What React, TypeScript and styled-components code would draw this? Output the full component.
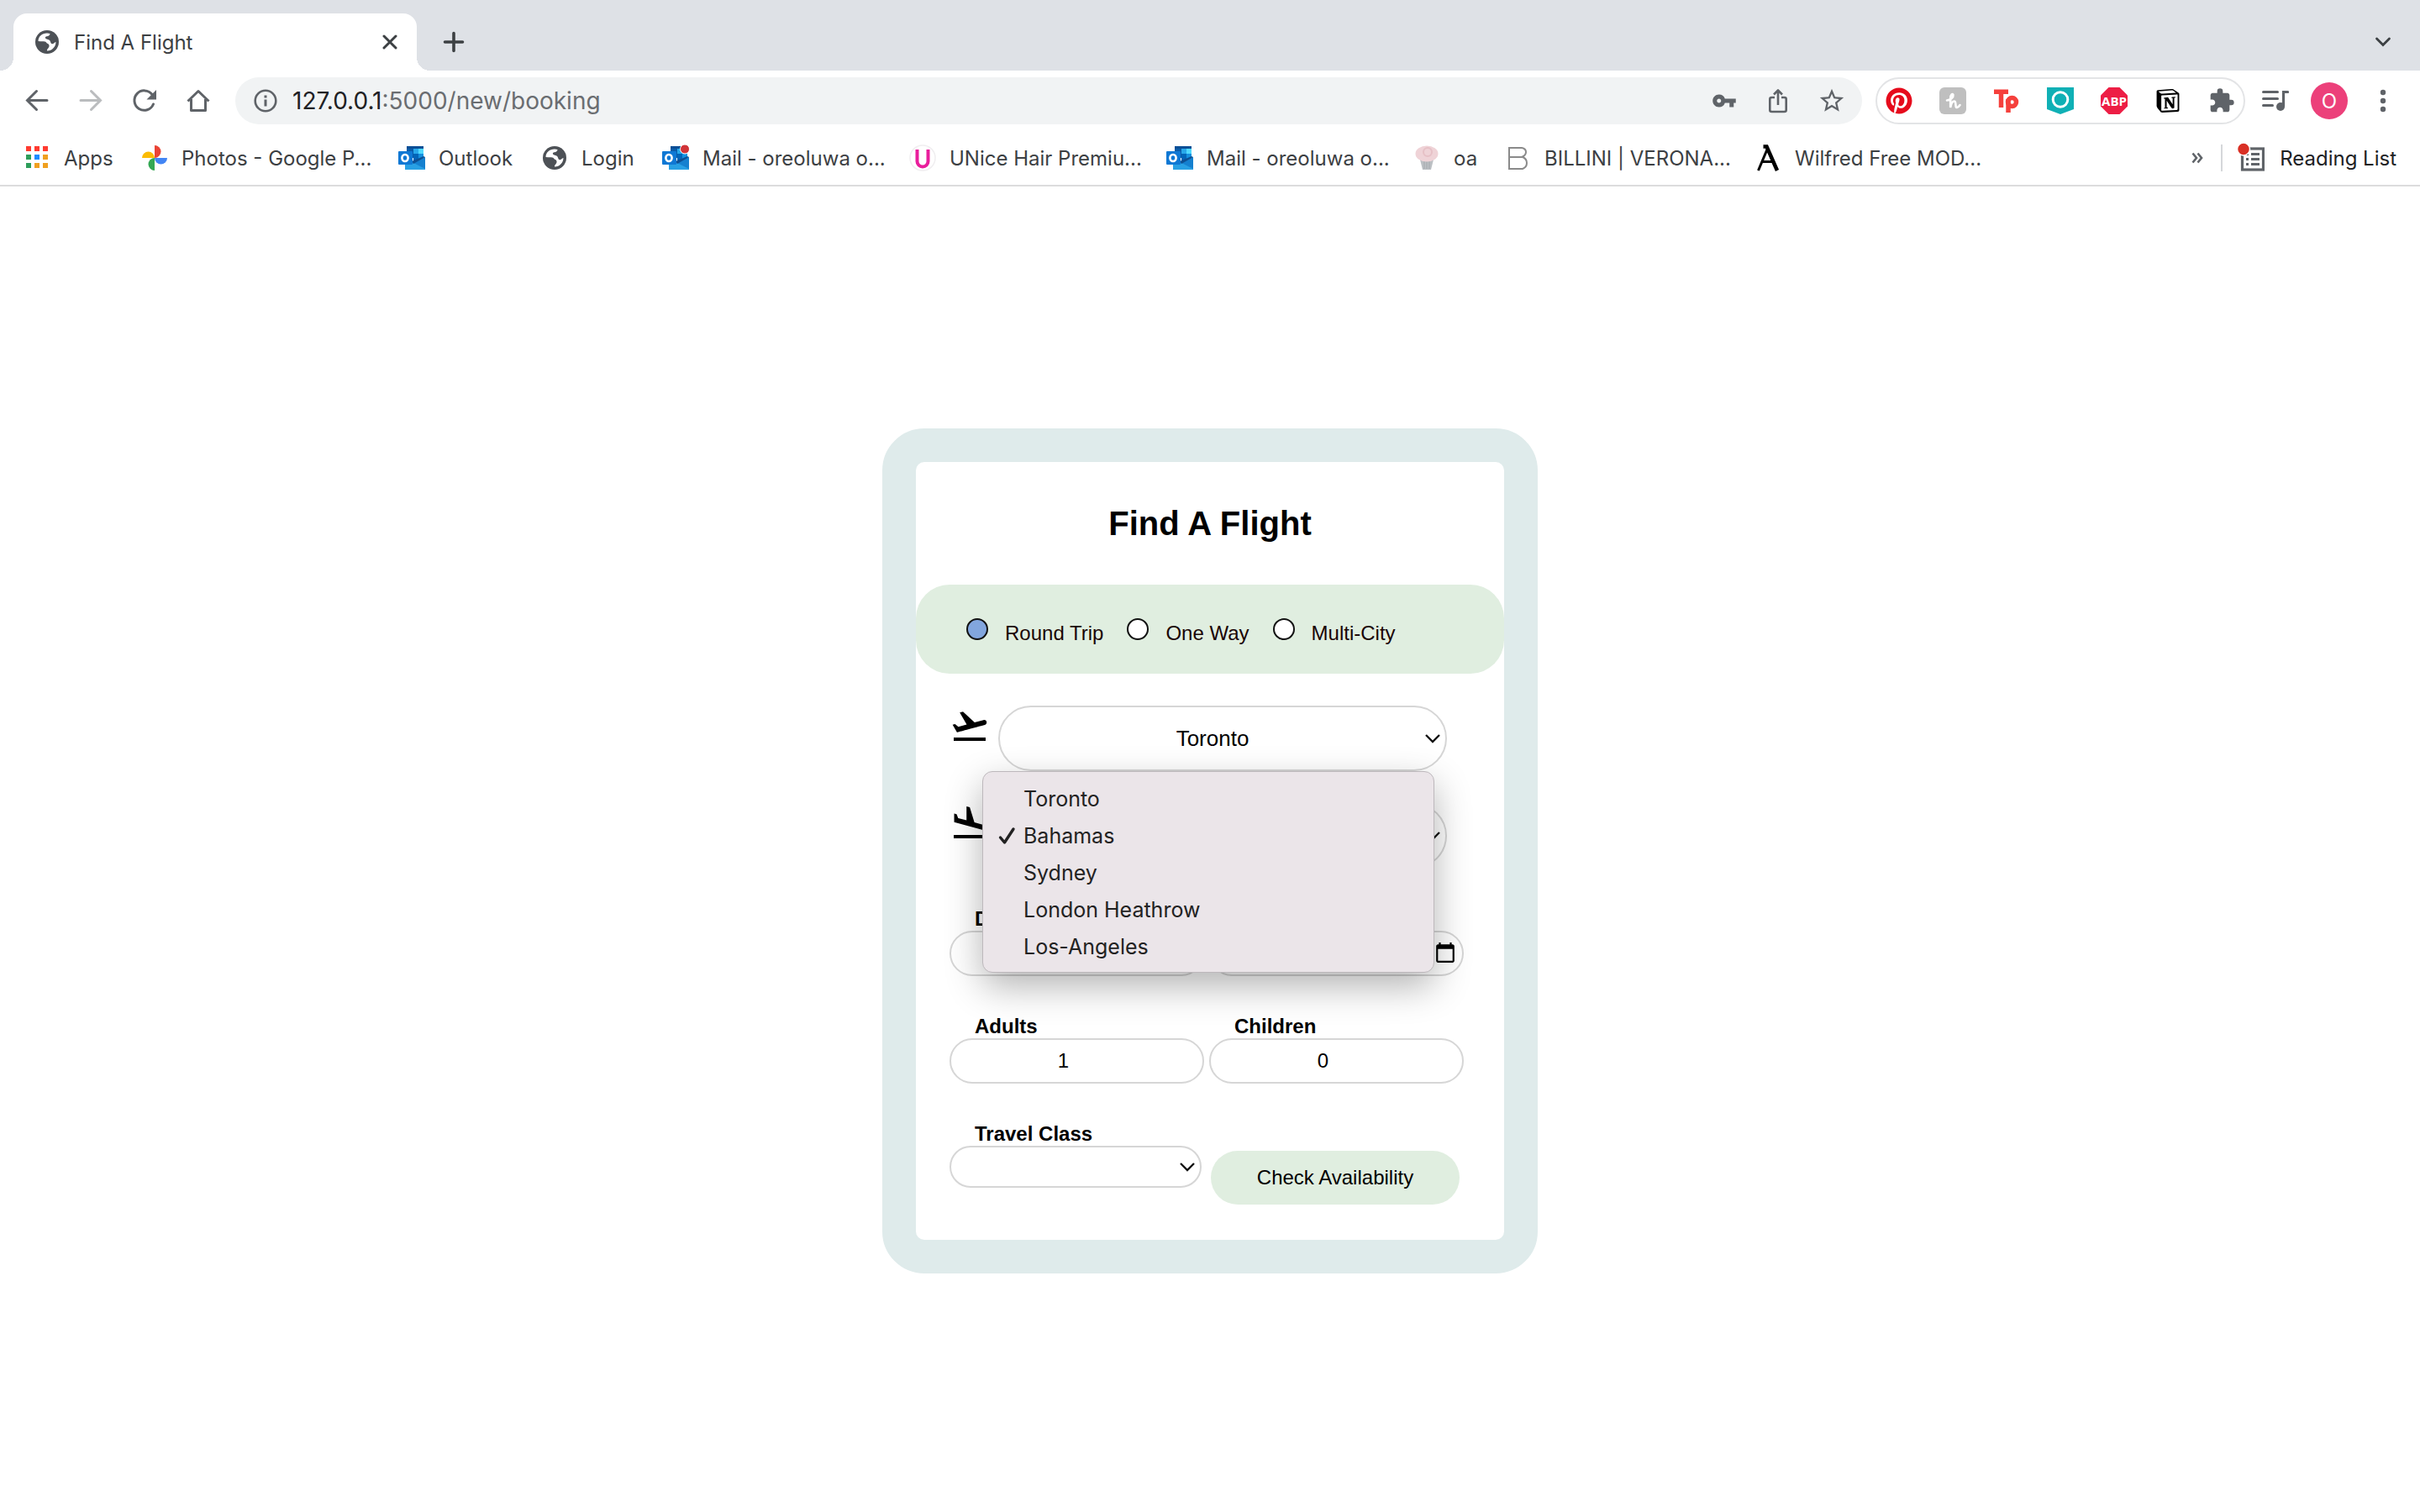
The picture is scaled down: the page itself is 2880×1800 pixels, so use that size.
import React, { ReactNode } from "react";
import styled, { createGlobalStyle, css } from "styled-components";
import { MdExtension, MdFlightLand, MdFlightTakeoff, MdStarBorder, MdVpnKey } from "react-icons/md";
import { FaPinterest } from "react-icons/fa";
import { SiNotion } from "react-icons/si";

const UI_FONT = `Inter, "Liberation Sans", sans-serif`;
const PAGE_FONT = `"Liberation Sans", Arial, sans-serif`;

const GlobalStyle = createGlobalStyle`
  *, *::before, *::after { box-sizing: border-box; }
  body { margin: 0; background: #fff; font-family: ${PAGE_FONT}; }
  button, input, select { font: inherit; color: inherit; margin: 0; }
  svg { display: block; flex: none; }
`;

const Window = styled.div`
  min-height: 100vh;
  display: flex;
  flex-direction: column;
`;

const Chrome = styled.header`
  font-family: ${UI_FONT};
  color: #3c4043;
  border-bottom: 2px solid #dcdcdd;
`;

const TabStrip = styled.div`
  display: flex;
  align-items: center;
  gap: 28px;
  height: 84px;
  padding: 16px 28px 0 16px;
  background: #dee1e6;
`;

const Tab = styled.div`
  position: relative;
  display: flex;
  align-items: center;
  gap: 16px;
  width: 480px;
  height: 68px;
  padding: 0 20px 0 24px;
  border-radius: 16px 16px 0 0;
  background: #fff;
  font-size: 24px;
  &::before, &::after {
    content: "";
    position: absolute;
    bottom: 0;
    width: 16px;
    height: 16px;
  }
  &::before { left: -16px; background: radial-gradient(circle at 0 0, transparent 16px, #fff 16px); }
  &::after { right: -16px; background: radial-gradient(circle at 100% 0, transparent 16px, #fff 16px); }
`;

const TabTitle = styled.span`
  flex: 1;
`;

const IconButton = styled.button<{ $dim?: boolean }>`
  display: flex;
  align-items: center;
  justify-content: center;
  flex: none;
  width: 32px;
  height: 32px;
  padding: 0;
  border: 0;
  background: none;
  color: ${(p) => (p.$dim ? "#babcbe" : "#5f6368")};
`;

const CloseButton = styled(IconButton)`
  width: 24px;
  height: 24px;
  color: #3c4043;
`;

const Spacer = styled.div`
  flex: 1;
`;

const Toolbar = styled.div`
  display: flex;
  align-items: center;
  height: 72px;
  padding: 0 28px;
`;

const NavButtons = styled.nav`
  display: flex;
  gap: 32px;
  margin-right: 28px;
`;

const Omnibox = styled.div`
  display: flex;
  align-items: center;
  flex: 1;
  height: 56px;
  padding: 0 20px;
  border-radius: 28px;
  background: #f1f3f4;
  color: #5f6368;
`;

const Address = styled.div`
  flex: 1;
  padding-left: 16px;
  font-size: 28px;
  color: #6a6d71;
`;

const Host = styled.span`
  color: #202124;
`;

const OmniActions = styled.div`
  display: flex;
  gap: 32px;
`;

const Extensions = styled.div`
  display: flex;
  align-items: center;
  justify-content: space-between;
  width: 440px;
  height: 56px;
  margin: 0 20px 0 16px;
  padding: 0 10px;
  border: 2px solid #e3e4e6;
  border-radius: 28px;
`;

const Avatar = styled.button`
  width: 44px;
  height: 44px;
  margin: 0 26px;
  padding: 0;
  border: 0;
  border-radius: 50%;
  background: #ec407a;
  color: #fff;
  font-size: 24px;
`;

const Bookmarks = styled.nav`
  display: flex;
  align-items: center;
  height: 64px;
  padding: 0 28px;
  font-size: 24px;
`;

const Bookmark = styled.a<{ $width: number }>`
  display: flex;
  align-items: center;
  flex: none;
  gap: 16px;
  width: ${(p) => p.$width}px;
  color: inherit;
  text-decoration: none;
  white-space: nowrap;
`;

const ReadingList = styled.button`
  display: flex;
  align-items: center;
  gap: 18px;
  height: 32px;
  margin-left: 12px;
  padding: 0 0 0 18px;
  border: 0;
  border-left: 2px solid #d5d7da;
  background: none;
  color: #202124;
`;

const Page = styled.main`
  flex: 1;
  display: flex;
  align-items: center;
  justify-content: center;
  padding-top: 4px;
`;

const Card = styled.form`
  width: 780px;
  padding-bottom: 42px;
  border: 40px solid #dfebeb;
  border-radius: 50px;
  color: #000;
  font-size: 24px;
  line-height: 28px;
`;

const Title = styled.h1`
  margin: 0;
  padding: 50px 0;
  font-size: 40px;
  line-height: 46px;
  text-align: center;
`;

const TripTypes = styled.fieldset`
  display: flex;
  gap: 28px;
  margin: 0;
  padding: 40px 60px 36px;
  border: 0;
  border-radius: 40px;
  background: #e0eee0;
  color: #1a0505;
`;

const TripType = styled.label`
  display: flex;
  gap: 20px;
`;

const TripText = styled.span`
  padding-top: 6px;
  line-height: 24px;
`;

const Radio = styled.input`
  appearance: none;
  width: 26px;
  height: 26px;
  border: 2px solid #111;
  border-radius: 50%;
  background: #fff;
  &:checked { background: #82a6de; }
`;

const Fields = styled.div`
  padding: 38px 40px 0;
`;

const Route = styled.div`
  position: relative;
  display: flex;
  gap: 10px;
  & + & { margin-top: 38px; }
`;

const SelectBox = styled.div<{ $width: number }>`
  position: relative;
  width: ${(p) => p.$width}px;
  svg {
    position: absolute;
    right: 7px;
    top: calc(50% - 8px);
    pointer-events: none;
  }
`;

const pill = css`
  display: block;
  width: 100%;
  border: 2px solid #d6d6d6;
  background: #fff;
`;

const Select = styled.select<{ $tall?: boolean }>`
  ${pill}
  appearance: none;
  height: ${(p) => (p.$tall ? 78 : 50)}px;
  padding: 0 24px 0 0;
  border-radius: 40px;
  font-size: 26px;
  text-align: center;
  text-align-last: center;
`;

const Menu = styled.ul`
  position: absolute;
  z-index: 1;
  top: -38px;
  left: 39px;
  width: 538px;
  margin: 0;
  padding: 10px 0 8px;
  border: 1px solid #bdb8bc;
  border-radius: 12px;
  background: #ebe5e9;
  box-shadow: 0 16px 44px rgba(0, 0, 0, 0.3);
  color: #222;
  font-family: ${UI_FONT};
  font-size: 25px;
  line-height: 44px;
  list-style: none;
`;

const MenuItem = styled.li`
  display: flex;
  align-items: center;
  gap: 8px;
  padding-left: 18px;
`;

const TickSlot = styled.span`
  width: 22px;
`;

const Pair = styled.div`
  display: grid;
  grid-template-columns: 303px 303px;
  gap: 6px;
  margin-top: 46px;
`;

const Label = styled.label`
  display: block;
  padding-left: 30px;
  font-weight: bold;
`;

const Input = styled.input`
  ${pill}
  height: 54px;
  border-radius: 27px;
  &[type="number"] {
    appearance: textfield;
    padding: 0 32px 0 0;
    text-align: center;
  }
  &::-webkit-inner-spin-button {
    appearance: none;
    display: none;
  }
  &[type="date"] { padding: 0 6px 0 36px; }
  &::-webkit-calendar-picker-indicator {
    width: 28px;
    height: 28px;
    padding: 0;
  }
`;

const Submit = styled.button`
  width: 296px;
  height: 64px;
  margin: 34px 0 0 2px;
  padding: 0;
  border: 0;
  border-radius: 32px;
  background: #e0eee0;
`;

const Chevron = () => (
  <svg width="20" height="16" viewBox="0 0 20 16" fill="none" stroke="#111" strokeWidth="2.4">
    <path d="M2 4l8 8 8-8" />
  </svg>
);

const Tick = () => (
  <svg width="22" height="24" viewBox="0 0 22 24" fill="none" stroke="#222" strokeWidth="3.4" strokeLinecap="round" strokeLinejoin="round">
    <path d="M2.500 14l5 6L18 4" />
  </svg>
);

const Globe = () => (
  <svg width="32" height="32" viewBox="2 2 32 32">
    <circle cx="18" cy="18" r="14" fill="#4d5156" />
    <path
      fill="#fff"
      d="M7.500 17C7.500 11.500 12 7.500 18 7.500L21.500 8C21.500 10 20 11 17.500 11.200C15.500 11.500 15.500 13 16.500 14C17.500 15 20.500 14.800 21.500 16.500C22.500 18 22 20 24 20.300C26 20.500 26.500 18.500 28.500 18C28.500 23.500 24 28.500 18 28.500C17.500 26 21 25 20.500 22C20 19.500 18 20.500 17 18.500C16 16.500 13 17.500 7.500 17z"
    />
  </svg>
);

const CloseGlyph = () => (
  <svg width="18" height="18" viewBox="0 0 18 18" stroke="currentColor" strokeWidth="3" strokeLinecap="round">
    <path d="M2 2l14 14M16 2L2 16" />
  </svg>
);

const PlusGlyph = () => (
  <svg width="26" height="26" viewBox="0 0 26 26" stroke="#3c4043" strokeWidth="3.600" strokeLinecap="round">
    <path d="M13 2.500v21M2.500 13h21" />
  </svg>
);

const TabSearchGlyph = () => (
  <svg width="20" height="14" viewBox="0 0 20 14" fill="none" stroke="#3c4043" strokeWidth="2.800" strokeLinecap="round">
    <path d="M2.500 3L10 10.500 17.500 3" />
  </svg>
);

const Arrow = ({ forward }: { forward?: boolean }) => (
  <svg width="32" height="32" viewBox="0 0 32 32" fill="none" stroke="currentColor" strokeWidth="3" strokeLinecap="round">
    <path d={forward ? "M4 15.500h23M16.500 4.500l11 11-11 11" : "M28 15.500H5M15.500 4.500l-11 11 11 11"} />
  </svg>
);

const Reload = () => (
  <svg width="32" height="32" viewBox="0 0 32 32">
    <path d="M26.500 20A11.700 11.700 0 1 1 25 8.500" fill="none" stroke="currentColor" strokeWidth="3" strokeLinecap="round" />
    <path d="M30 3v11.500H18.500z" fill="currentColor" />
  </svg>
);

const Home = () => (
  <svg width="32" height="32" viewBox="0 0 32 32" fill="none" stroke="currentColor" strokeWidth="3">
    <path d="M3.500 16.500L16 4.500l12.500 12M7.500 14v13.500h17V14" strokeLinejoin="round" />
  </svg>
);

const InfoGlyph = () => (
  <svg width="32" height="32" viewBox="0 0 32 32">
    <circle cx="16" cy="16" r="12.300" fill="none" stroke="currentColor" strokeWidth="2.600" />
    <path d="M14.500 9.500h3v3h-3zM14.500 14.500h3v8h-3z" fill="currentColor" />
  </svg>
);

const Share = () => (
  <svg width="32" height="32" viewBox="0 0 32 32" fill="none" stroke="currentColor" strokeWidth="2.600" strokeLinejoin="round">
    <path d="M12 12H8.500Q6.300 12 6.300 14v13q0 2 2.200 2h15q2.200 0 2.200-2V14q0-2-2.200-2H20M16 21V4.500M11 8.500l5-5 5 5" />
  </svg>
);

const Pinterest = () => (
  <svg width="32" height="32" viewBox="0 0 32 32">
    <circle cx="16" cy="16" r="15.500" fill="#fff" />
    <FaPinterest size={32} color="#e60b1c" />
  </svg>
);

const Honey = () => (
  <svg width="32" height="32" viewBox="0 0 32 32">
    <rect width="32" height="32" rx="6" fill="#bfbfbf" />
    <path d="M9 15.500c4-.5 8-3.500 7.500-6.500-.6-2.400-3.300-.5-3.300 4V24c.7-4 2-7.500 4.500-7.500 3 0 .5 8 3.300 7.500 1.500-.2 2.500-1.500 3.500-3" fill="none" stroke="#fff" strokeWidth="2.600" strokeLinecap="round" />
  </svg>
);

const Tp = () => (
  <svg width="32" height="32" viewBox="0 0 32 32" fill="none" stroke="#f5403c" strokeWidth="5.500">
    <path d="M1 5.200h17M9.500 4v20M18 30V14" />
    <circle cx="22.500" cy="17.500" r="5" />
  </svg>
);

const Shield = () => (
  <svg width="32" height="32" viewBox="0 0 32 32">
    <path d="M0 0h32v26l-16 6-16-6z" fill="#0fb0b5" />
    <circle cx="16" cy="14.500" r="8.800" fill="none" stroke="#fff" strokeWidth="3" />
  </svg>
);

const Adblock = () => (
  <svg width="32" height="32" viewBox="0 0 32 32">
    <path d="M9.500 0h13L32 9.500v13L22.500 32h-13L0 22.500v-13z" fill="#ed1e45" />
    <text x="16" y="21.500" textAnchor="middle" fill="#fff" fontFamily="Open Sans, sans-serif" fontWeight="700" fontSize="15">ABP</text>
  </svg>
);

const MediaQueue = () => (
  <svg width="32" height="32" viewBox="0 0 32 32">
    <path d="M1.500 5.500h17M1.500 13.500h17M1.500 21.500h11" stroke="currentColor" strokeWidth="3" strokeLinecap="round" />
    <path d="M30.500 5.500h-5V22" fill="none" stroke="currentColor" strokeWidth="3.200" strokeLinecap="round" />
    <circle cx="22" cy="23" r="5" fill="currentColor" />
  </svg>
);

const Kebab = () => (
  <svg width="32" height="32" viewBox="0 0 32 32" fill="currentColor">
    <circle cx="16" cy="6" r="3.200" />
    <circle cx="16" cy="16" r="3.200" />
    <circle cx="16" cy="26" r="3.200" />
  </svg>
);

const More = () => (
  <svg width="16" height="16" viewBox="0 0 16 16" fill="none" stroke="#5f6368" strokeWidth="2.600">
    <path d="M2.500 2.500L7 8l-4.500 5.500M8.500 2.500L13 8l-4.500 5.500" />
  </svg>
);

const ReadingGlyph = () => (
  <svg width="32" height="36" viewBox="0 0 32 36">
    <rect x="5.500" y="7" width="25" height="25" fill="none" stroke="#5f6368" strokeWidth="3.200" />
    <path d="M10 13.500h3M16 13.500h10M10 19.500h3M16 19.500h10M10 25.500h3M16 25.500h10" stroke="#5f6368" strokeWidth="2.800" />
    <circle cx="7" cy="7.500" r="7.500" fill="#d93025" stroke="#fff" strokeWidth="1.500" />
  </svg>
);

const Outlook = ({ dot }: { dot?: boolean }) => (
  <svg width="32" height="32" viewBox="0 0 32 32">
    <path d="M10 2h20v14H10z" fill="#0a5ba8" />
    <path d="M10 2h20v3H10z" fill="#0b4f96" />
    <path d="M18 5h6v6h-6z" fill="#28a8ea" />
    <path d="M24 5h6v6h-6z" fill="#50d9ff" />
    <path d="M18 11h6v8h-6z" fill="#0364b8" />
    <path d="M24 11h6v6h-6z" fill="#1490df" />
    <path d="M8 30V20l10 2 14-7v15z" fill="#28a0e4" />
    <path d="M16 21l16-6v14z" fill="#1580cf" />
    <path d="M16 20l14-6 2 1-14 8z" fill="#0d4f93" />
    <rect y="8" width="17" height="16" rx="1" fill="#0f78d4" />
    <ellipse cx="8" cy="16" rx="3.600" ry="4" fill="none" stroke="#fff" strokeWidth="2.600" />
    {dot && <circle cx="27" cy="5.500" r="5.500" fill="#d13438" stroke="#fff" strokeWidth="1" />}
  </svg>
);

const AppsGlyph = () => (
  <svg width="32" height="32" viewBox="0 0 32 32">
    {["#ff3b30", "#ff3b30", "#ff3b30", "#2e9e5b", "#1a8cff", "#f0a020", "#2e9e5b", "#f0a020", "#f0a020"].map((c, i) => (
      <rect key={i} x={3 + (i % 3) * 10} y={2 + Math.floor(i / 3) * 10} width="6" height="6" fill={c} />
    ))}
  </svg>
);

const Photos = () => (
  <svg width="32" height="32" viewBox="0 0 32 32">
    <path d="M16 1a7.500 7.500 0 0 1 0 15z" fill="#ea4335" />
    <path d="M31 16a7.500 7.500 0 0 1-15 0z" fill="#4285f4" />
    <path d="M16 31a7.500 7.500 0 0 1 0-15z" fill="#34a853" />
    <path d="M1 16a7.500 7.500 0 0 1 15 0z" fill="#fbbc04" />
  </svg>
);

const Unice = () => (
  <svg width="32" height="32" viewBox="0 0 32 32">
    <circle cx="16" cy="16" r="15" fill="#fff" stroke="#f0eef0" strokeWidth="1.500" />
    <path d="M9.500 6v14a6.500 6.500 0 0 0 13 0V6" fill="none" stroke="#e91e9c" strokeWidth="4" />
  </svg>
);

const Cupcake = () => (
  <svg width="32" height="32" viewBox="0 0 32 32">
    <path d="M8 18h16l-3 12H11z" fill="#bcc0c4" />
    <path d="M13 20v9M16 20v9M19 20v9" stroke="#a5a9ad" />
    <ellipse cx="16" cy="11" rx="13.500" ry="9.500" fill="#efd3d7" />
    <circle cx="17" cy="9" r="5" fill="none" stroke="#e6c0c6" strokeWidth="2" />
  </svg>
);

const Billini = () => (
  <svg width="32" height="32" viewBox="0 0 32 32" fill="none" stroke="#8a8a8a" strokeWidth="2">
    <path d="M6 4h15q5 1 5 5t-5 6H6zM6 15h16q5 2 5 7t-5 7H6z" />
  </svg>
);

const Wilfred = () => (
  <svg width="32" height="32" viewBox="0 0 32 32" fill="none" stroke="#000">
    <path d="M10.500 2.500h4L27 31" strokeWidth="4.500" />
    <path d="M15 6L4.500 31M9 20.500h13" strokeWidth="3" />
  </svg>
);

const bookmarks: { name: string; icon: ReactNode; width: number }[] = [
  { name: "Apps", icon: <AppsGlyph />, width: 140 },
  { name: "Photos - Google P...", icon: <Photos />, width: 306 },
  { name: "Outlook", icon: <Outlook />, width: 170 },
  { name: "Login", icon: <Globe />, width: 144 },
  { name: "Mail - oreoluwa o...", icon: <Outlook dot />, width: 294 },
  { name: "UNice Hair Premiu...", icon: <Unice />, width: 306 },
  { name: "Mail - oreoluwa o...", icon: <Outlook />, width: 294 },
  { name: "oa", icon: <Cupcake />, width: 108 },
  { name: "BILLINI | VERONA...", icon: <Billini />, width: 298 },
  { name: "Wilfred Free MOD...", icon: <Wilfred />, width: 270 },
];

const extensions: { name: string; icon: ReactNode }[] = [
  { name: "Pinterest", icon: <Pinterest /> },
  { name: "Honey", icon: <Honey /> },
  { name: "Tp", icon: <Tp /> },
  { name: "Shield", icon: <Shield /> },
  { name: "Adblock Plus", icon: <Adblock /> },
  { name: "Notion", icon: <SiNotion size={28} color="#000" /> },
  { name: "Extensions", icon: <MdExtension size={32} /> },
];

const trips = ["Round Trip", "One Way", "Multi-City"];
const cities = ["Toronto", "Bahamas", "Sydney", "London Heathrow", "Los-Angeles"];
const destination = "Bahamas";

const CityOptions = () => (
  <>
    {cities.map((city) => (
      <option key={city}>{city}</option>
    ))}
  </>
);

export default function App() {
  return (
    <Window>
      <GlobalStyle />
      <Chrome>
        <TabStrip>
          <Tab>
            <Globe />
            <TabTitle>Find A Flight</TabTitle>
            <CloseButton aria-label="Close tab"><CloseGlyph /></CloseButton>
          </Tab>
          <IconButton aria-label="New tab"><PlusGlyph /></IconButton>
          <Spacer />
          <IconButton aria-label="Search tabs"><TabSearchGlyph /></IconButton>
        </TabStrip>
        <Toolbar>
          <NavButtons>
            <IconButton aria-label="Back"><Arrow /></IconButton>
            <IconButton aria-label="Forward" $dim><Arrow forward /></IconButton>
            <IconButton aria-label="Reload"><Reload /></IconButton>
            <IconButton aria-label="Home"><Home /></IconButton>
          </NavButtons>
          <Omnibox>
            <InfoGlyph />
            <Address><Host>127.0.0.1</Host>:5000/new/booking</Address>
            <OmniActions>
              <IconButton aria-label="Passwords"><MdVpnKey size={30} /></IconButton>
              <IconButton aria-label="Share"><Share /></IconButton>
              <IconButton aria-label="Bookmark this page"><MdStarBorder size={34} /></IconButton>
            </OmniActions>
          </Omnibox>
          <Extensions>
            {extensions.map((e) => (
              <IconButton key={e.name} aria-label={e.name}>{e.icon}</IconButton>
            ))}
          </Extensions>
          <IconButton aria-label="Media"><MediaQueue /></IconButton>
          <Avatar>O</Avatar>
          <IconButton aria-label="Menu"><Kebab /></IconButton>
        </Toolbar>
        <Bookmarks>
          {bookmarks.map((b, i) => (
            <Bookmark key={i} href="#" $width={b.width}>
              {b.icon}
              {b.name}
            </Bookmark>
          ))}
          <Spacer />
          <IconButton aria-label="More bookmarks"><More /></IconButton>
          <ReadingList>
            <ReadingGlyph />
            Reading List
          </ReadingList>
        </Bookmarks>
      </Chrome>
      <Page>
        <Card>
          <Title>Find A Flight</Title>
          <TripTypes>
            {trips.map((trip, i) => (
              <TripType key={trip}>
                <Radio type="radio" name="trip" defaultChecked={i === 0} />
                <TripText>{trip}</TripText>
              </TripType>
            ))}
          </TripTypes>
          <Fields>
            <Route>
              <MdFlightTakeoff size={48} />
              <SelectBox $width={534}>
                <Select $tall aria-label="From" defaultValue="Toronto"><CityOptions /></Select>
                <Chevron />
              </SelectBox>
            </Route>
            <Route>
              <MdFlightLand size={48} />
              <SelectBox $width={534}>
                <Select $tall aria-label="To" defaultValue={destination}><CityOptions /></Select>
                <Chevron />
              </SelectBox>
              <Menu role="listbox" aria-label="To">
                {cities.map((city) => (
                  <MenuItem key={city} role="option" aria-selected={city === destination}>
                    <TickSlot>{city === destination && <Tick />}</TickSlot>
                    {city}
                  </MenuItem>
                ))}
              </Menu>
            </Route>
            <Pair>
              <div>
                <Label htmlFor="depart">Departure</Label>
                <Input id="depart" type="date" />
              </div>
              <div>
                <Label htmlFor="return">Return</Label>
                <Input id="return" type="date" />
              </div>
            </Pair>
            <Pair>
              <div>
                <Label htmlFor="adults">Adults</Label>
                <Input id="adults" type="number" defaultValue={1} />
              </div>
              <div>
                <Label htmlFor="children">Children</Label>
                <Input id="children" type="number" defaultValue={0} />
              </div>
            </Pair>
            <Pair>
              <div>
                <Label htmlFor="class">Travel Class</Label>
                <SelectBox $width={300}>
                  <Select id="class" defaultValue=""><option value="" /></Select>
                  <Chevron />
                </SelectBox>
              </div>
              <Submit type="button">Check Availability</Submit>
            </Pair>
          </Fields>
        </Card>
      </Page>
    </Window>
  );
}
